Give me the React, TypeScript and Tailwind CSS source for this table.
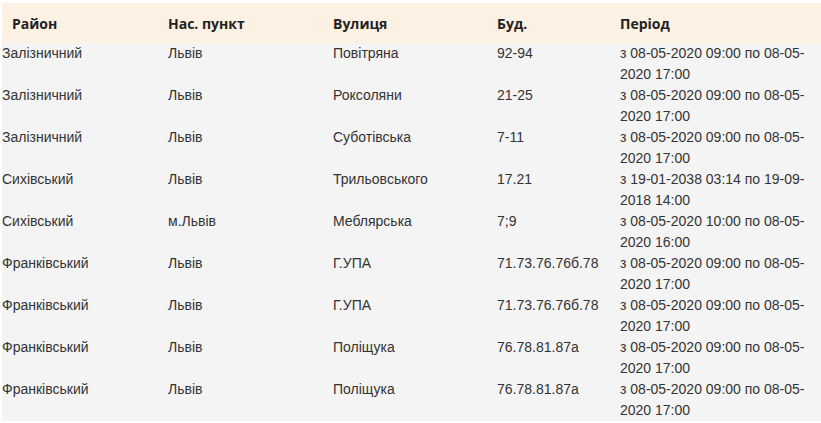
const COLS = 'grid grid-cols-[166px_165px_164px_123px_198px]';

const rows = [
  ['Залізничний', 'Львів', 'Повітряна', '92-94', 'з 08-05-2020 09:00 по 08-05-2020 17:00'],
  ['Залізничний', 'Львів', 'Роксоляни', '21-25', 'з 08-05-2020 09:00 по 08-05-2020 17:00'],
  ['Залізничний', 'Львів', 'Суботівська', '7-11', 'з 08-05-2020 09:00 по 08-05-2020 17:00'],
  ['Сихівський', 'Львів', 'Трильовського', '17.21', 'з 19-01-2038 03:14 по 19-09-2018 14:00'],
  ['Сихівський', 'м.Львів', 'Меблярська', '7;9', 'з 08-05-2020 10:00 по 08-05-2020 16:00'],
  ['Франківський', 'Львів', 'Г.УПА', '71.73.76.76б.78', 'з 08-05-2020 09:00 по 08-05-2020 17:00'],
  ['Франківський', 'Львів', 'Г.УПА', '71.73.76.76б.78', 'з 08-05-2020 09:00 по 08-05-2020 17:00'],
  ['Франківський', 'Львів', 'Поліщука', '76.78.81.87а', 'з 08-05-2020 09:00 по 08-05-2020 17:00'],
  ['Франківський', 'Львів', 'Поліщука', '76.78.81.87а', 'з 08-05-2020 09:00 по 08-05-2020 17:00'],
];

export default function App() {
  return (
    <div className="w-[821px] h-[423px] bg-white pt-[3px] pl-[2px] overflow-hidden">
      {/* Header */}
      <div
        className={`${COLS} h-[40px] items-center bg-[#fdf1e3] text-[14px] font-bold text-[#222]`}
        style={{ fontFamily: '"Open Sans", "Liberation Sans", sans-serif' }}
      >
        <div className="pl-[10px]">Район</div>
        <div>Нас. пункт</div>
        <div>Вулиця</div>
        <div>Буд.</div>
        <div>Період</div>
      </div>

      {/* Body */}
      <div
        className="bg-[#f4f4f4] text-[14px] leading-[21px] text-[#333]"
        style={{ fontFamily: '"Liberation Sans", Arial, sans-serif' }}
      >
        {rows.map((r, i) => (
          <div key={i} className={`${COLS} h-[42px] items-start`}>
            {r.map((c, j) => (
              <div key={j}>{c}</div>
            ))}
          </div>
        ))}
      </div>
    </div>
  );
}
